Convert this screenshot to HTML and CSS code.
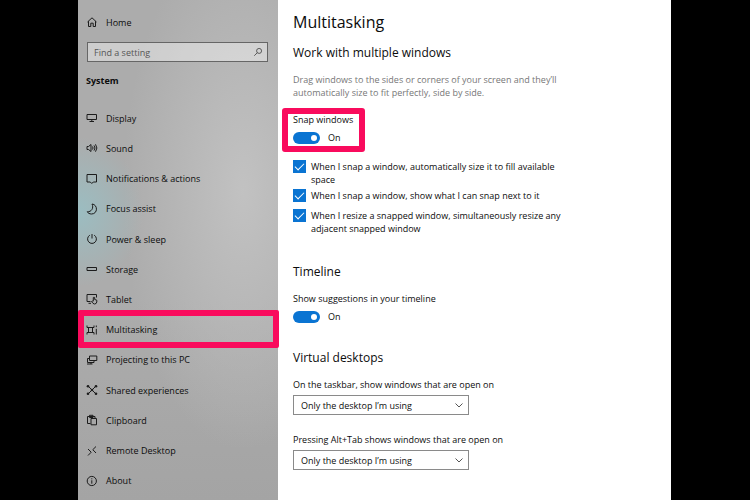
FILE: index.html
```
<!DOCTYPE html>
<html lang="en">

<head>
    <meta charset="UTF-8" />
    <meta name="viewport" content="width=device-width, initial-scale=1.0" />
    <title>Settings - Multitasking</title>
    <link rel="stylesheet" href="styles.css">
</head>

<body>
    <div class="window">
        <aside class="sidebar">
            <a href="#" class="nav-link home">
                <svg class="icon" viewBox="0 0 12 12"><path d="M1.5 6 L6 1.8 L10.5 6 M2.5 5.2 V10.5 H4.8 V7.2 H7.2 V10.5 H9.5 V5.2" /></svg>
                Home
            </a>
            <div class="search">
                <input type="text" placeholder="Find a setting" aria-label="Find a setting">
                <svg class="icon search-icon" viewBox="0 0 12 12"><circle cx="7.3" cy="4.7" r="3" /><path d="M5.2 6.8 L1.5 10.5" /></svg>
            </div>
            <h2 class="group">System</h2>
            <nav class="nav">
                <a href="#" class="nav-link">
                    <svg class="icon" viewBox="0 0 12 12"><path d="M1 2.5 H10.5 V7.5 H1 Z M5.8 7.5 V9.5 M3.5 9.5 H8" /></svg>
                    Display
                </a>
                <a href="#" class="nav-link">
                    <svg class="icon" viewBox="0 0 12 12"><path d="M1 4.5 H2.5 L5 2.5 V9.5 L2.5 7.5 H1 Z M6.5 4.5 Q7.6 6 6.5 7.5 M8 3.4 Q10 6 8 8.6 M9.5 2.3 Q12.3 6 9.5 9.7" /></svg>
                    Sound
                </a>
                <a href="#" class="nav-link">
                    <svg class="icon" viewBox="0 0 12 12"><path d="M1 1.5 H10.5 V9 H7.3 L5.8 10.5 L4.3 9 H1 Z" /></svg>
                    Notifications &amp; actions
                </a>
                <a href="#" class="nav-link">
                    <svg class="icon" viewBox="0 0 12 12"><path d="M6 1 C12 1.5 12 11 5.5 11 C3.5 11 2 10 1.2 8.8 C5.5 9 8 5 6 1 Z" /></svg>
                    Focus assist
                </a>
                <a href="#" class="nav-link">
                    <svg class="icon" viewBox="0 0 12 12"><path d="M6 1 V5.5 M3.8 2.2 A4.4 4.4 0 1 0 8.2 2.2" /></svg>
                    Power &amp; sleep
                </a>
                <a href="#" class="nav-link">
                    <svg class="icon" viewBox="0 0 12 12"><path d="M1 4.5 H10.5 V7.5 H1 Z" /></svg>
                    Storage
                </a>
                <a href="#" class="nav-link">
                    <svg class="icon" viewBox="0 0 12 12"><path d="M4.5 8.5 H1 V1.5 H10.5 V4.5 M2.5 10.3 H5 M7.3 8 V4.5 Q8 3.8 8.7 4.5 V6.5 L10.8 7.2 V9 Q10.5 11 8.5 11 Q7 11 5.5 8.5 Q6 7.5 7.3 8.5" /></svg>
                    Tablet
                </a>
                <a href="#" class="nav-link selected">
                    <svg class="icon" viewBox="0 0 12 12"><path d="M1 1.5 V3.5 H8 V1.5 M2.5 3.5 V8.5 M6.5 3.5 V8.5 M1 10.5 V8.5 H8 V10.5 M10.3 1.5 V3.2 M10.3 4.8 V10.5" /></svg>
                    Multitasking
                </a>
                <a href="#" class="nav-link">
                    <svg class="icon" viewBox="0 0 12 12"><path d="M3.5 2 H10.8 V6.5 H3.5 Z M3.5 4.5 H1.5 V8.5 H8 V6.5 M1 10 H6.5 M5 8.5 V10" /></svg>
                    Projecting to this PC
                </a>
                <a href="#" class="nav-link">
                    <svg class="icon" viewBox="0 0 12 12"><path d="M2 2 L10 10 M10 2 L2 10" /><g class="dots"><circle cx="2" cy="2.2" r="1.3" /><circle cx="10" cy="2.2" r="1.3" /><circle cx="2" cy="9.8" r="1.3" /><circle cx="10" cy="9.8" r="1.3" /><circle cx="6" cy="6" r="1.3" /></g></svg>
                    Shared experiences
                </a>
                <a href="#" class="nav-link">
                    <svg class="icon" viewBox="0 0 12 12"><path d="M4.5 9.5 H1.5 V2.5 H9 V4 M3.5 3.5 V1.3 H7 V3.5 Z M5 4.5 H10.5 V10.8 H5 Z" /></svg>
                    Clipboard
                </a>
                <a href="#" class="nav-link">
                    <svg class="icon" viewBox="0 0 12 12"><path d="M2 4 L5.2 7.2 L2 10.5 M10 1.5 L6.8 4.7 L10 8" /></svg>
                    Remote Desktop
                </a>
                <a href="#" class="nav-link">
                    <svg class="icon" viewBox="0 0 12 12"><circle cx="5.8" cy="6" r="4.6" /><path d="M5.8 5.3 V8.7 M5.8 3.3 V4.3" /></svg>
                    About
                </a>
            </nav>
        </aside>

        <main class="content">
            <h1>Multitasking</h1>

            <section>
                <h2>Work with multiple windows</h2>
                <p class="hint">Drag windows to the sides or corners of your screen and they’ll automatically size to fit perfectly, side by side.</p>
                <div class="setting snap">
                    <label for="snap">Snap windows</label>
                    <div class="toggle-row">
                        <input type="checkbox" class="toggle" id="snap" checked>
                        <span>On</span>
                    </div>
                </div>
                <div class="checks">
                    <label class="check"><input type="checkbox" checked><span>When I snap a window, automatically size it to fill available space</span></label>
                    <label class="check"><input type="checkbox" checked><span>When I snap a window, show what I can snap next to it</span></label>
                    <label class="check"><input type="checkbox" checked><span>When I resize a snapped window, simultaneously resize any adjacent snapped window</span></label>
                </div>
            </section>

            <section>
                <h2>Timeline</h2>
                <div class="setting">
                    <label for="timeline">Show suggestions in your timeline</label>
                    <div class="toggle-row">
                        <input type="checkbox" class="toggle" id="timeline" checked>
                        <span>On</span>
                    </div>
                </div>
            </section>

            <section>
                <h2>Virtual desktops</h2>
                <div class="setting">
                    <label for="taskbar">On the taskbar, show windows that are open on</label>
                    <div class="select">
                        <select id="taskbar">
                            <option>Only the desktop I’m using</option>
                        </select>
                        <svg class="chevron" viewBox="0 0 8 8"><path d="M0.5 2.5 L4 6 L7.5 2.5" /></svg>
                    </div>
                </div>
                <div class="setting">
                    <label for="alttab">Pressing Alt+Tab shows windows that are open on</label>
                    <div class="select">
                        <select id="alttab">
                            <option>Only the desktop I’m using</option>
                        </select>
                        <svg class="chevron" viewBox="0 0 8 8"><path d="M0.5 2.5 L4 6 L7.5 2.5" /></svg>
                    </div>
                </div>
            </section>
        </main>
    </div>
</body>

</html>
```
FILE: styles.css
```
* {
    box-sizing: border-box;
}

body {
    margin: 0;
    background: black;
    color: #0c0c0c;
    font-family: "Open Sans", "Noto Sans", sans-serif;
    font-size: 9px;
    line-height: 13px;
}

h1, h2, p {
    margin: 0;
}

input, select {
    font: inherit;
    color: inherit;
    margin: 0;
}

.window {
    display: flex;
    min-height: 100vh;
    margin: 0 79px 0 78px;
    background: white;
}

/* left side */
.sidebar {
    display: flex;
    flex-direction: column;
    flex: 0 0 200px;
    padding: 12px 0 4px;
    background:
        radial-gradient(ellipse 65px 75px at 0 212px, rgba(152, 192, 197, 0.85), rgba(165, 185, 188, 0) 100%),
        radial-gradient(ellipse 120px 260px at 165px 190px, rgba(196, 196, 196, 0.9), rgba(190, 190, 190, 0) 100%),
        linear-gradient(#acacac, #acacac 60%, #a4a4a4);
}

.nav-link {
    display: flex;
    align-items: center;
    gap: 8px;
    padding-left: 8px;
    color: #0c0c0c;
    text-decoration: none;
}

.home {
    height: 20px;
}

.icon {
    width: 12px;
    height: 12px;
    fill: none;
    stroke: #1c1c1c;
    stroke-width: 1;
}

.dots {
    fill: #1c1c1c;
    stroke: none;
}

.search {
    display: flex;
    align-items: center;
    height: 20px;
    margin: 10px 10px 0 9px;
    padding: 0 4px 0 6px;
    border: 1px solid #666;
    background: rgba(255, 255, 255, 0.4);
}

.search input {
    flex: 1;
    min-width: 0;
    padding: 0;
    border: 0;
    background: none;
}

.search input::placeholder {
    color: #555;
    opacity: 1;
}

.search-icon {
    width: 10px;
    height: 10px;
    stroke: #444;
}

.group {
    margin: 12px 0 16px 8px;
    font-size: 9px;
    font-weight: bold;
}

.nav {
    flex: 1;
    display: grid;
    grid-auto-rows: 1fr;
}

.selected {
    position: relative;
}

.selected::after {
    content: "";
    position: absolute;
    inset: -5px -1px -3px 0;
    border: 6px solid #f90b5d;
    border-radius: 2px;
}

/* right side */
.content {
    flex: 1;
    padding: 10px 108px 0 15px;
}

h1 {
    font-size: 16px;
    line-height: 24px;
    font-weight: normal;
}

.content h2 {
    font-size: 12px;
    line-height: 18px;
    font-weight: normal;
}

.content section {
    margin-bottom: 26px;
}

.content section:last-child {
    margin-bottom: 0;
}

h1 + section {
    margin-top: 10px;
}

.hint {
    margin-top: 11px;
    color: #777;
}

.setting {
    margin-top: 11px;
}

.setting + .setting {
    margin-top: 18px;
}

.setting.snap {
    position: relative;
    width: 62px;
    margin-top: 14px;
    white-space: nowrap;
}

.snap::after {
    content: "";
    position: absolute;
    inset: -5px -10px -8px -11px;
    border: 6px solid #f90b5d;
    border-radius: 3px;
    pointer-events: none;
}

.toggle-row {
    display: flex;
    align-items: center;
    gap: 8px;
    margin-top: 5px;
}

.toggle {
    appearance: none;
    display: flex;
    align-items: center;
    justify-content: flex-end;
    width: 27px;
    height: 12px;
    padding: 0 3px;
    border-radius: 6px;
    background: #0a74d2;
}

.toggle::after {
    content: "";
    width: 6px;
    height: 6px;
    border-radius: 50%;
    background: white;
}

.checks {
    display: grid;
    gap: 3px;
    margin-top: 16px;
    padding-bottom: 2px;
}

.check {
    display: flex;
    align-items: flex-start;
    gap: 5px;
    min-height: 17px;
}

.check input {
    appearance: none;
    display: grid;
    place-items: center;
    flex: none;
    width: 13px;
    height: 13px;
    background: #0a74d2;
}

.check input::after {
    content: "";
    width: 8px;
    height: 4px;
    border: solid white;
    border-width: 0 0 1px 1px;
    transform: translateY(-1px) rotate(-45deg);
}

.select {
    position: relative;
    width: 176px;
    margin-top: 4px;
}

.select select {
    display: block;
    appearance: none;
    width: 100%;
    height: 20px;
    padding: 0 20px 0 7px;
    border: 1px solid #8a8a8a;
    border-radius: 0;
    background: white;
}

.chevron {
    position: absolute;
    right: 6px;
    top: 6px;
    width: 8px;
    height: 8px;
    fill: none;
    stroke: #555;
    pointer-events: none;
}
```
